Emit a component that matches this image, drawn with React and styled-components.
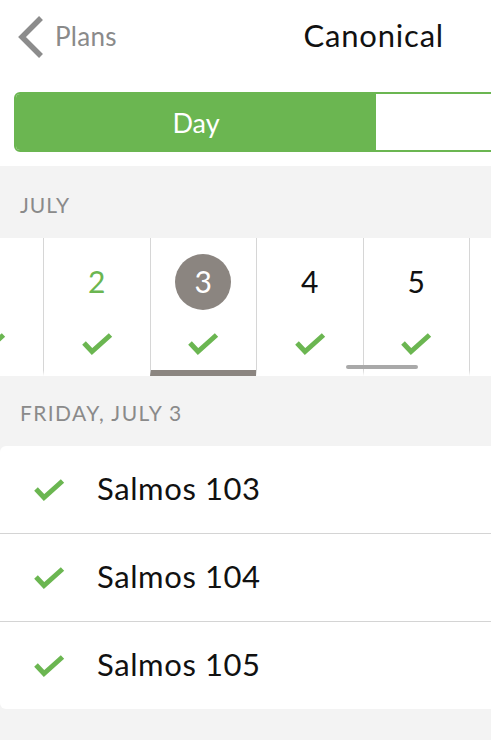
import styled, { createGlobalStyle } from 'styled-components'

const GREEN = '#6bb651'
const GREY_TEXT = '#8a8a8a'
const STONE = '#8b8580'

// the first and last cells are only partly on screen, their numbers are out of view
const days = [
  { n: 1, label: '' },
  { n: 2, label: '2', done: true },
  { n: 3, label: '3', selected: true },
  { n: 4, label: '4' },
  { n: 5, label: '5' },
  { n: 6, label: '' },
]

const readings = ['Salmos 103', 'Salmos 104', 'Salmos 105']

const Check = ({ className }) =>
  <svg className={className} width="32" height="24" viewBox="0 0 32 24" fill="none">
    <polyline points="3,11 11,19.5 29.5,3" stroke={GREEN} strokeWidth="5" strokeLinejoin="miter" />
  </svg>

const App = () =>
  <Page>
    <GlobalStyle />

    <Header>
      <Nav>
        <Back>
          <svg width="30" height="44" viewBox="0 0 30 44" fill="none">
            <polyline points="25,3 6,22 25,41" stroke="#8c8c8c" strokeWidth="5.5" />
          </svg>
          <span>Plans</span>
        </Back>
        <Title>Canonical</Title>
      </Nav>

      <SegmentRow>
        <Segment>
          <SegmentItem active>Day</SegmentItem>
          <SegmentItem />
        </Segment>
      </SegmentRow>
    </Header>

    <SectionLabel>JULY</SectionLabel>

    <Strip>
      <DayTrack>
        {days.map(day =>
          <DayCell key={day.n} selected={day.selected}>
            <DayNumber done={day.done} selected={day.selected}>{day.label}</DayNumber>
            <DayCheck />
          </DayCell>
        )}
      </DayTrack>
      <ScrollThumb />
    </Strip>

    <SectionLabel short>FRIDAY, JULY 3</SectionLabel>

    <ReadingList>
      {readings.map(title =>
        <Reading key={title}>
          <ReadingCheck />
          <ReadingTitle>{title}</ReadingTitle>
        </Reading>
      )}
    </ReadingList>
  </Page>

const GlobalStyle = createGlobalStyle`
  html, body {
    margin: 0;
    padding: 0;
    background: #f3f3f3;
  }

  body {
    font-family: Lato, "Open Sans", sans-serif;
    -webkit-font-smoothing: antialiased;
  }
`

const Page = styled.div`
  width: 491px;
  height: 740px;
  overflow: hidden;
  background: #f3f3f3;
`

const Header = styled.div`
  background: #fff;
`

const Nav = styled.div`
  height: 72px;
  display: flex;
  align-items: center;
  justify-content: space-between;
  padding: 0 47px 0 16px;
`

const Back = styled.div`
  display: flex;
  align-items: center;
  gap: 9px;
  color: ${GREY_TEXT};
  font-size: 26px;
  letter-spacing: 0.3px;

  & > svg {
    margin-top: 1px;
  }
`

const Title = styled.div`
  font-size: 31px;
  letter-spacing: 0.8px;
  color: #111;
  margin-top: -3px;
`

const SegmentRow = styled.div`
  padding: 20px 0 14px 14px;
  overflow: hidden;
`

const Segment = styled.div`
  width: 724px;
  height: 60px;
  box-sizing: border-box;
  display: flex;
  border: 2px solid ${GREEN};
  border-radius: 6px;
  overflow: hidden;
`

const SegmentItem = styled.div`
  flex: 1;
  display: flex;
  align-items: center;
  justify-content: center;
  font-size: 27px;
  color: #fff;
  background: ${props => props.active ? GREEN : '#fff'};
`

const SectionLabel = styled.div`
  height: ${props => props.short ? 70 : 72}px;
  box-sizing: border-box;
  padding: ${props => props.short ? 25 : 27}px 20px 0;
  font-size: 21px;
  letter-spacing: ${props => props.short ? 1.4 : 1}px;
  line-height: 24px;
  color: ${GREY_TEXT};
`

const Strip = styled.div`
  position: relative;
  height: 138px;
  background: #fff;
  overflow: hidden;
`

const DayTrack = styled.div`
  display: flex;
  margin-left: -63.5px;
`

const DayCell = styled.div`
  flex: 0 0 106.5px;
  height: 138px;
  box-sizing: border-box;
  border-left: 1px solid #d6d6d6;
  display: flex;
  flex-direction: column;
  align-items: center;
  padding-top: 16px;
  border-bottom: 6px solid ${props => props.selected ? STONE : 'transparent'};
`

const DayNumber = styled.div`
  width: 56px;
  height: 56px;
  box-sizing: border-box;
  padding-bottom: 3px;
  border-radius: 50%;
  display: flex;
  align-items: center;
  justify-content: center;
  font-size: 30px;
  color: ${props => props.selected ? '#fff' : props.done ? GREEN : '#111'};
  background: ${props => props.selected ? STONE : 'transparent'};
`

const DayCheck = styled(Check)`
  margin-top: 22px;
`

const ScrollThumb = styled.div`
  position: absolute;
  left: 346px;
  top: 127px;
  width: 72px;
  height: 4px;
  border-radius: 2px;
  background: #a9a9a9;
`

const ReadingList = styled.div`
  background: #fff;
  border-radius: 6px 0 0 6px;
`

const Reading = styled.div`
  height: 88px;
  display: flex;
  align-items: center;
  padding-left: 33px;
  border-top: 1px solid #d4d4d4;
  box-sizing: border-box;

  &:first-child {
    border-top: none;
    height: 87px;
  }
`

const ReadingCheck = styled(Check)`
  flex: none;
`

const ReadingTitle = styled.div`
  margin-left: 32px;
  margin-top: -3px;
  font-size: 31px;
  letter-spacing: 0.6px;
  color: #111;
`

export default App
